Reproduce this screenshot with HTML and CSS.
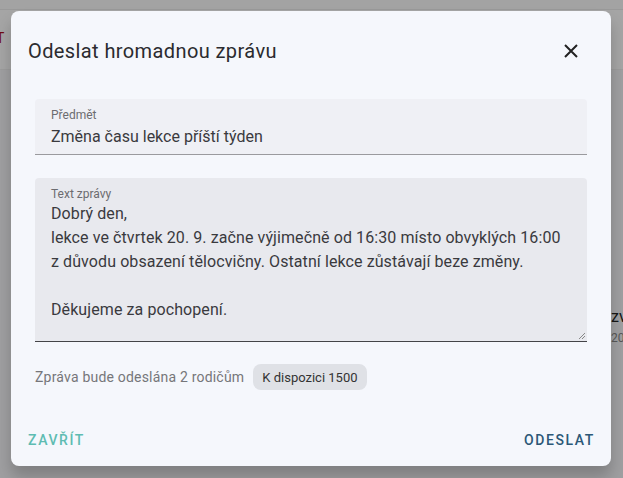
FILE: index.html
```html
<!DOCTYPE html>
<html lang="cs">
<head>
<meta charset="utf-8">
<link rel="stylesheet" href="styles.css">
</head>
<body>
<div class="page">
  <div class="topbar"></div>
  <div class="subbar"><span class="red">T</span></div>
  <div class="content">
    <div class="side-text">
      <span class="side-name">zv</span>
      <span class="side-date">202</span>
    </div>
  </div>
</div>
<div class="scrim"></div>
<div class="dialog">
  <div class="dialog-title">
    <h2>Odeslat hromadnou zprávu</h2>
    <button class="close" aria-label="Zavřít">
      <svg width="14" height="14" viewBox="0 0 14 14"><path d="M1 1L13 13M13 1L1 13" stroke="#222" stroke-width="2" fill="none"/></svg>
    </button>
  </div>
  <div class="dialog-body">
    <div class="field">
      <label>Předmět</label>
      <div class="value">Změna času lekce příští týden</div>
    </div>
    <div class="field area">
      <label>Text zprávy</label>
      <div class="value multi">Dobrý den,<br>lekce ve čtvrtek 20. 9. začne výjimečně od 16:30 místo obvyklých 16:00<br>z důvodu obsazení tělocvičny. Ostatní lekce zůstávají beze změny.<br><br>Děkujeme za pochopení.</div>
      <svg class="grip" width="9" height="9" viewBox="0 0 9 9"><path d="M8 2L2 8M8 5L5 8" stroke="#888" stroke-width="1"/></svg>
    </div>
    <div class="info">
      <span>Zpráva bude odeslána 2 rodičům</span>
      <span class="chip">K dispozici 1500</span>
    </div>
  </div>
  <div class="dialog-actions">
    <button class="btn close-btn">ZAVŘÍT</button>
    <button class="btn send-btn">ODESLAT</button>
  </div>
</div>
</body>
</html>
```
FILE: styles.css
```css
* { box-sizing: border-box; }
html, body { margin: 0; padding: 0; }
body {
  width: 623px;
  height: 478px;
  overflow: hidden;
  font-family: Roboto, "Noto Sans", sans-serif;
  background: #f4f5f8;
  position: relative;
}
.page { width: 623px; height: 478px; display: flex; flex-direction: column; }
.topbar { height: 10px; background: #fafafa; border-bottom: 1px solid #ececec; }
.subbar { height: 60px; background: #fdfdfd; padding: 18px 0 0 0; border-bottom: 1px solid #f0f0f0; }
.red { color: #b01020; font-size: 14px; margin-left: -4px; }
.content { flex: 1; display: flex; justify-content: flex-end; }
.side-text { display: flex; flex-direction: column; padding-top: 237px; width: 12px; overflow: hidden; white-space: nowrap; }
.side-name { font-size: 16px; color: #222; }
.side-date { font-size: 12px; color: #888; margin-top: 5px; }
.scrim { position: absolute; inset: 0; background: rgba(0,0,0,0.35); }
.dialog {
  position: absolute;
  left: 11px; top: 11px;
  width: 600px; height: 455px;
  background: #f5f7fc;
  border-radius: 8px;
  box-shadow: 0 11px 15px rgba(0,0,0,0.2);
  display: flex; flex-direction: column;
}
.dialog-title {
  display: flex; align-items: center; justify-content: space-between;
  padding: 20px 32px 0 17px;
  height: 60px;
}
.dialog-title h2 { margin: 0; font-size: 20px; font-weight: 400; color: #2b2b2f; letter-spacing: 0.4px; }
.close { background: none; border: none; padding: 0; width: 16px; height: 16px; display: flex; align-items: center; justify-content: center; }
.dialog-body { padding: 28px 24px 0 24px; display: flex; flex-direction: column; }
.field {
  position: relative;
  background: #eff0f5;
  border-radius: 4px 4px 0 0;
  border-bottom: 1px solid #9a9a9e;
  padding: 8px 16px 0 16px;
  height: 56px;
}
.field label { display: block; font-size: 12px; color: #6c6c70; line-height: 16px; }
.field .value { font-size: 16px; color: #3a3a3e; line-height: 24px; margin-top: 2px; }
.field.area {
  margin-top: 23px;
  height: 164px;
  background: #e8e9ee;
  border-bottom: 1px solid #444448;
}
.field.area .value { margin-top: 0; letter-spacing: 0.09px; }
.grip { position: absolute; right: 1px; bottom: 1px; }
.info { display: flex; align-items: center; gap: 9px; margin-top: 22px; padding-left: 0; font-size: 14px; color: #76767a; letter-spacing: 0.2px; }
.chip { background: #dfe1e6; color: #333; font-size: 13px; border-radius: 8px; padding: 0 9px; height: 26px; display: inline-flex; align-items: center; letter-spacing: 0; }
.dialog-actions { margin-top: auto; display: flex; justify-content: space-between; padding: 0 16px 18px 17px; }
.btn { background: none; border: none; font-family: inherit; font-size: 14px; font-weight: 500; letter-spacing: 1.6px; padding: 0; }
.close-btn { color: #5ebcb2; }
.send-btn { color: #2c5877; }
```
